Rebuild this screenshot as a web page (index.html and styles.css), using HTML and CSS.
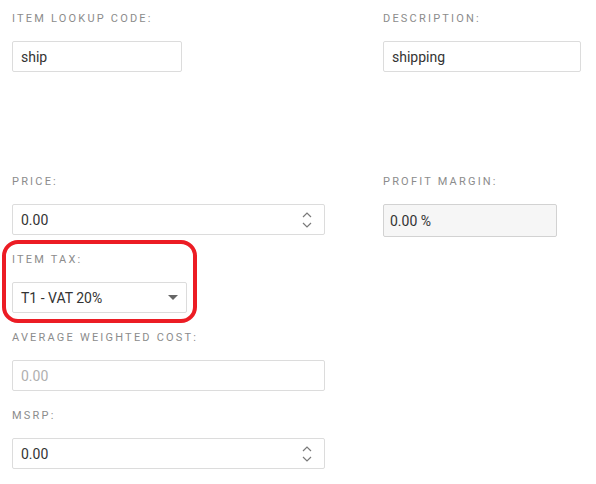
FILE: index.html
```html
<!DOCTYPE html>
<html>
<head>
    <title>Item details</title>
    <link rel="stylesheet" href="styles.css">
</head>
<body>
<div class="item-form">
    <div class="form-row top-row">
        <div class="field">
            <div class="field-label">Item Lookup Code:</div>
            <div class="box box-short"><span>ship</span></div>
        </div>
        <div class="field">
            <div class="field-label">Description:</div>
            <div class="box box-full"><span>shipping</span></div>
        </div>
    </div>

    <div class="form-row">
        <div class="col">
            <div class="field">
                <div class="field-label">Price:</div>
                <div class="box box-full">
                    <span>0.00</span>
                    <svg class="spinner" width="10" height="16" viewBox="0 0 10 16">
                        <path d="M1 5 L5 1 L9 5" />
                        <path d="M1 11 L5 15 L9 11" />
                    </svg>
                </div>
            </div>
            <div class="field highlighted">
                <div class="field-label">Item Tax:</div>
                <div class="box box-select">
                    <span>T1 - VAT 20%</span>
                    <i class="caret"></i>
                </div>
            </div>
            <div class="field">
                <div class="field-label">Average Weighted Cost:</div>
                <div class="box box-full disabled"><span>0.00</span></div>
            </div>
            <div class="field">
                <div class="field-label">MSRP:</div>
                <div class="box box-full">
                    <span>0.00</span>
                    <svg class="spinner" width="10" height="16" viewBox="0 0 10 16">
                        <path d="M1 5 L5 1 L9 5" />
                        <path d="M1 11 L5 15 L9 11" />
                    </svg>
                </div>
            </div>
        </div>
        <div class="col">
            <div class="field">
                <div class="field-label">Profit Margin:</div>
                <div class="box box-readonly"><span>0.00 %</span></div>
            </div>
        </div>
    </div>
</div>
</body>
</html>
```

FILE: styles.css
```css
body {
    margin: 0;
    padding: 0;
    background-color: #fff;
    font-family: Roboto, 'Liberation Sans', sans-serif;
    color: #333;
}

.item-form {
    padding: 11px 12px 0;
}

.form-row {
    display: grid;
    grid-template-columns: 313px 198px;
    column-gap: 58px;
}

.top-row {
    margin-bottom: 85px;
}

.field {
    margin-bottom: 17px;
}

.field-label {
    font-size: 11px;
    line-height: 16px;
    letter-spacing: 2.2px;
    text-transform: uppercase;
    color: #8c8c8c;
    margin-bottom: 14px;
}

.box {
    display: flex;
    align-items: center;
    justify-content: space-between;
    box-sizing: border-box;
    height: 31px;
    padding: 0 8px;
    border: 1px solid #dcdcdc;
    border-radius: 2px;
    background-color: #fff;
    font-size: 14px;
    color: #333;
}

.box-short {
    width: 170px;
}

.box-full {
    width: 100%;
}

.box-select {
    width: 175px;
    padding-right: 8px;
}

.box-readonly {
    width: 174px;
    height: 33px;
    background-color: #f6f6f6;
    border-color: #d2d2d2;
    padding-left: 6px;
}

.disabled {
    color: #b0b0b0;
}

.spinner {
    margin-right: 4px;
}

.spinner path {
    fill: none;
    stroke: #7a7a7a;
    stroke-width: 1.2;
}

.caret {
    width: 0;
    height: 0;
    border-left: 5px solid transparent;
    border-right: 5px solid transparent;
    border-top: 5px solid #666;
}

/* red annotation ring round the tax field */
.highlighted {
    position: relative;
}

.highlighted::before {
    content: "";
    position: absolute;
    top: -12px;
    left: -10px;
    width: 195px;
    height: 83px;
    box-sizing: border-box;
    border: 4px solid #ec1c24;
    border-radius: 16px;
}
```
